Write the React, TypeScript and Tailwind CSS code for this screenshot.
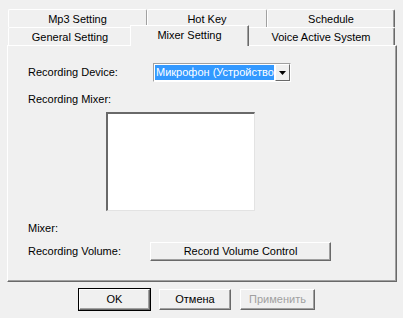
import React from "react";

const font = { fontFamily: '"Liberation Sans", Arial, sans-serif' };

function Tab({ label, w, last }: { label: string; w: string; last?: boolean }) {
  return (
    <div
      className={`${w} h-full flex items-center justify-center pt-[1px] border-t border-l border-t-white border-l-white border-r ${
        last ? "border-r-[#696969] shadow-[inset_-1px_0_0_#a0a0a0]" : "border-r-[#a0a0a0]"
      } rounded-tl-[2px] rounded-tr-[2px] text-black`}
    >
      {label}
    </div>
  );
}

function Btn({ label, w, def, disabled }: { label: string; w: string; def?: boolean; disabled?: boolean }) {
  return (
    <div
      className={`${w} h-[23px] flex items-center justify-center bg-[#f0f0f0] border ${
        def ? "border-black" : "border-transparent"
      }`}
    >
      <div
        className={`w-full h-full flex items-center justify-center border-t border-l border-t-white border-l-white border-b border-r border-b-[#696969] border-r-[#696969] shadow-[inset_-1px_-1px_0_#a0a0a0] ${
          disabled ? "text-[#a0a0a0]" : "text-black"
        }`}
      >
        {label}
      </div>
    </div>
  );
}

export default function App() {
  return (
    <div className="w-[403px] h-[318px] bg-[#f0f0f0] pt-[9px] px-[7px] text-[11px] text-black" style={font}>
      {/* Tabs */}
      <div className="flex h-[18px] ml-[1px] w-[387px]">
        <Tab label="Mp3 Setting" w="w-[139px]" />
        <Tab label="Hot Key" w="w-[120px]" />
        <Tab label="Schedule" w="w-[128px]" last />
      </div>
      <div className="flex h-[18px] ml-[1px] w-[387px]">
        <Tab label="General Setting" w="w-[124px]" />
        <div className="relative z-10 w-[119px] h-[21px] -mt-[2px] -mx-[2px] flex items-start justify-center pt-[1px] bg-[#f0f0f0] border-t border-l border-t-white border-l-white border-r border-r-[#696969] shadow-[inset_-1px_0_0_#a0a0a0]">
          Mixer Setting
        </div>
        <Tab label="Voice Active System" w="flex-1" last />
      </div>

      {/* Panel */}
      <div className="h-[237px] w-[390px] border-t border-l border-t-white border-l-white border-r border-b border-r-[#696969] border-b-[#696969] shadow-[inset_-1px_-1px_0_#a0a0a0] pl-[20px] flex flex-col">
        <div className="flex items-center mt-[17px] h-[19px]">
          <div className="w-[125px]">Recording Device:</div>
          <div className="w-[138px] h-[19px] flex border-t border-l border-t-[#a0a0a0] border-l-[#a0a0a0] border-b border-r border-b-white border-r-white bg-white">
            <div className="flex-1 flex items-center p-[1px] overflow-hidden">
              <div className="w-full h-full bg-[#3399ff] text-white whitespace-nowrap overflow-hidden flex items-center pl-[1px]">
                Микрофон (Устройство
              </div>
            </div>
            <div className="w-[15px] h-full flex items-center justify-center bg-[#f0f0f0] border-t border-l border-t-white border-l-white border-b border-r border-b-[#696969] border-r-[#696969]">
              <svg width="7" height="4" viewBox="0 0 7 4">
                <polygon points="0,0 7,0 3.5,4" fill="#000" />
              </svg>
            </div>
          </div>
        </div>

        <div className="mt-[10px] h-[14px] flex items-center">Recording Mixer:</div>

        <div className="mt-[6px] ml-[78px] w-[149px] h-[99px] bg-white border-t-2 border-l-2 border-t-[#696969] border-l-[#696969] border-b border-r border-b-[#e3e3e3] border-r-[#e3e3e3]" />

        <div className="mt-[10px] h-[14px] flex items-center">Mixer:</div>

        <div className="flex items-center mt-[7px] h-[19px]">
          <div className="w-[122px]">Recording Volume:</div>
          <div className="w-[181px] h-[19px] flex items-center justify-center border-t border-l border-t-white border-l-white border-b border-r border-b-[#696969] border-r-[#696969] shadow-[inset_-1px_-1px_0_#a0a0a0]">
            Record Volume Control
          </div>
        </div>
      </div>

      {/* Dialog buttons */}
      <div className="flex gap-[7px] mt-[6px] ml-[71px]">
        <Btn label="OK" w="w-[73px]" def />
        <Btn label="Отмена" w="w-[74px]" />
        <Btn label="Применить" w="w-[77px]" disabled />
      </div>
    </div>
  );
}
